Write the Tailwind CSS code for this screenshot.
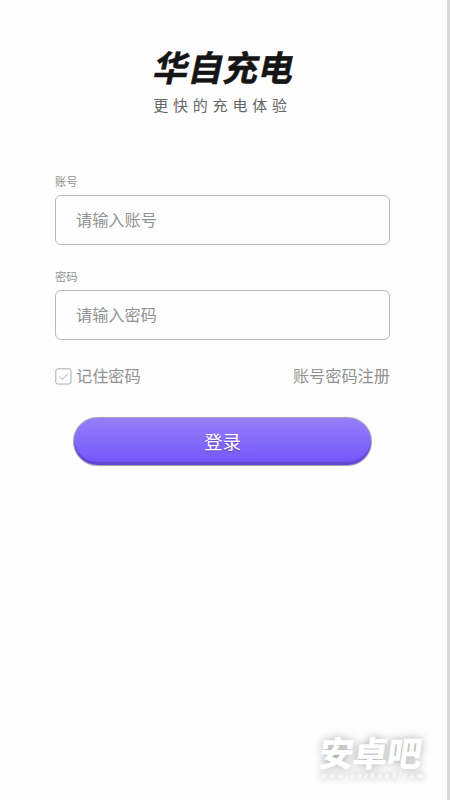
<!DOCTYPE html>
<html lang="zh-CN">
<head>
<meta charset="utf-8">
<meta name="viewport" content="width=device-width, initial-scale=1">
<title>华自充电</title>
<script src="https://cdn.jsdelivr.net/npm/@tailwindcss/browser@4"></script>
</head>
<body class="bg-[#fefefe]">
<div class="flex h-[800px] w-[450px] flex-col overflow-hidden border-r-3 border-[#d9d9d9] bg-[#fefefe] font-['Noto_Sans_CJK_SC',sans-serif] text-[#929292]">
  <header class="flex flex-col items-center pt-[44px]">
    <h1 class="-skew-x-12 pl-[3px] text-[35px] leading-[44px] font-bold text-[#151515] [-webkit-text-stroke:0.5px_#151515]">华自充电</h1>
    <p class="mt-[6px] pr-[2px] text-[15px] leading-[22px] tracking-[4.8px] font-normal text-[#666]">更快的充电体验</p>
  </header>
  <form class="flex flex-1 flex-col px-[55px] pt-[57px]">
    <label class="text-[11.3px] leading-[16px]">账号</label>
    <input class="mt-[6px] h-[50px] w-[335px] rounded-[6px] border border-[#b9b9c2] px-5 pb-[2px] text-[16.2px] placeholder:text-[#929292]" placeholder="请输入账号">
    <label class="mt-[23px] text-[11.3px] leading-[16px]">密码</label>
    <input type="password" class="mt-[6px] h-[50px] w-[335px] rounded-[6px] border border-[#b9b9c2] px-5 pb-[2px] text-[16.2px] placeholder:text-[#929292]" placeholder="请输入密码">
    <div class="mt-[24px] flex h-6 w-[335px] items-center justify-between text-[16.2px]">
      <div class="flex items-center gap-[4px]">
        <svg class="size-[17px]" viewBox="0 0 17 17" fill="none" stroke="#aaa"><rect x=".8" y=".8" width="15.2" height="15.2" rx="2"/><path d="M4.5 8.8l2.8 2.7 5.4-5.7"/></svg>
        <span class="pb-[2px]">记住密码</span>
      </div>
      <span class="pb-[2px]">账号密码注册</span>
    </div>
    <button type="button" class="mt-[29px] ml-[18px] h-[49px] w-[299px] shrink-0 rounded-full border border-[#a7a3b4] bg-linear-to-b from-[#967ffc] to-[#7254f8] text-[18.5px] text-white shadow-[inset_0_-3px_1px_#6049d0,0_0_1px_#bbb] text-shadow-[0_1px_1px_rgb(60_40_140/0.5)]">登录</button>
  </form>
  <footer class="flex h-[69px] shrink-0 flex-col items-end pr-[25px]">
    <div class="-skew-x-8 text-[34px] leading-[42px] font-bold text-white text-shadow-[0_0_10px_rgb(0_0_0/0.4)] [-webkit-text-stroke:0.8px_white]">安卓吧</div>
    <div class="-mt-[3px] -mr-[4px] font-['Liberation_Serif',serif] text-[8px] leading-[12px] font-bold tracking-[2.85px] text-white italic text-shadow-[0_0_7px_rgb(0_0_0/0.6)]">www.anzhuo8.com</div>
  </footer>
</div>
</body>
</html>
